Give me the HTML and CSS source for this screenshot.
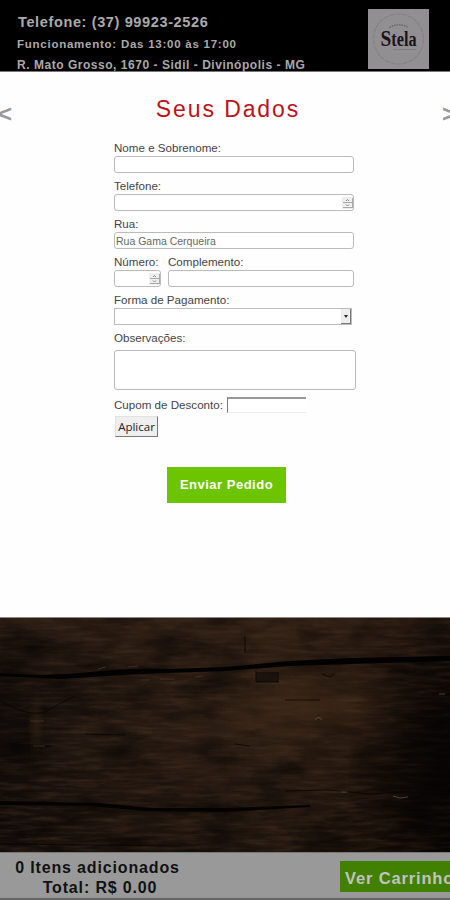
FILE: index.html
```html
<!DOCTYPE html>
<html lang="pt-br">
<head>
    <meta charset="UTF-8">
    <meta name="viewport" content="width=device-width, initial-scale=1.0">
    <title>Seus Dados</title>
    <link rel="stylesheet" href="styles.css">
</head>
<body>
    <!-- Cabeçalho -->
    <header class="topo">
        <div class="contato">
            <p class="telefone">Telefone: (37) 99923-2526</p>
            <p class="horario">Funcionamento: Das 13:00 às 17:00</p>
            <p class="endereco">R. Mato Grosso, 1670 - Sidil - Divinópolis - MG</p>
        </div>
        <svg class="logo" viewBox="0 0 60 60">
            <circle cx="30" cy="30" r="25" fill="none" stroke="#858286" stroke-width="1.2" stroke-dasharray="5 1"/>
            <path d="M21 18.5Q30 13 40 18.5" fill="none" stroke="#6c696e" stroke-width="1.5" stroke-dasharray="1.5 1"/>
            <text class="logo-nome" x="12" y="37" textLength="36" lengthAdjust="spacingAndGlyphs"><tspan class="inicial">S</tspan>tela</text>
            <path d="M25 40.5H47" stroke="#77747a" stroke-dasharray="1.5 .8"/>
        </svg>
    </header>

    <!-- Dados do cliente -->
    <main class="dados">
        <span class="seta">&lt;</span>
        <h1>Seus Dados</h1>
        <span class="seta direita">&gt;</span>

        <form class="formulario">
            <label for="nome">Nome e Sobrenome:</label>
            <input type="text" id="nome">

            <label for="telefone">Telefone:</label>
            <div class="numerico">
                <input type="text" id="telefone">
                <svg class="spin" viewBox="0 0 11 12"><path d="M1 5.5H10M1 10.5H10M10.5 1V11" stroke="#aaa" fill="none"/><path d="M4 4l1.5-1.5L7 4M4 7.5L5.5 9 7 7.5" stroke="#888" fill="none"/></svg>
            </div>

            <label for="rua">Rua:</label>
            <input type="text" id="rua" value="Rua Gama Cerqueira">

            <div class="linha">
                <div class="numero">
                    <label for="numero">Número:</label>
                    <div class="numerico">
                        <input type="text" id="numero">
                        <svg class="spin" viewBox="0 0 11 12"><path d="M1 5.5H10M1 10.5H10M10.5 1V11" stroke="#aaa" fill="none"/><path d="M4 4l1.5-1.5L7 4M4 7.5L5.5 9 7 7.5" stroke="#888" fill="none"/></svg>
                    </div>
                </div>
                <div class="complemento">
                    <label for="complemento">Complemento:</label>
                    <input type="text" id="complemento">
                </div>
            </div>

            <label for="pagamento">Forma de Pagamento:</label>
            <div class="pagamento" id="pagamento"><span class="abrir"></span></div>

            <label for="obs">Observações:</label>
            <textarea id="obs"></textarea>

            <div class="cupom">
                <label for="cupom">Cupom de Desconto:</label>
                <input type="text" id="cupom">
            </div>
            <button type="button" class="aplicar">Aplicar</button>
        </form>

        <button type="button" class="enviar">Enviar Pedido</button>
    </main>

    <!-- Fundo de madeira -->
    <svg class="madeira" viewBox="0 0 450 234" preserveAspectRatio="none">
        <defs>
            <linearGradient id="base" x1="0" x2="1">
                <stop offset="0" stop-color="#18110e"/>
                <stop offset=".25" stop-color="#251911"/>
                <stop offset=".6" stop-color="#302015"/>
                <stop offset=".78" stop-color="#25180f"/>
                <stop offset="1" stop-color="#0e0806"/>
            </linearGradient>
            <linearGradient id="sombra" x1="0" y1="0" x2="0" y2="1">
                <stop offset="0" stop-color="#3a2618" stop-opacity=".5"/>
                <stop offset=".5" stop-color="#000" stop-opacity="0"/>
                <stop offset="1" stop-color="#000" stop-opacity=".35"/>
            </linearGradient>
            <radialGradient id="canto">
                <stop offset="0" stop-color="#050302" stop-opacity=".85"/>
                <stop offset="1" stop-color="#050302" stop-opacity="0"/>
            </radialGradient>
            <radialGradient id="brilho">
                <stop offset="0" stop-color="#55381f" stop-opacity=".45"/>
                <stop offset="1" stop-color="#55381f" stop-opacity="0"/>
            </radialGradient>
            <filter id="veios" x="0" y="0" width="100%" height="100%" color-interpolation-filters="sRGB">
                <feTurbulence type="fractalNoise" baseFrequency=".03 .25" numOctaves="5" seed="8"/>
                <feColorMatrix values="0 0 0 0 .27  0 0 0 0 .18  0 0 0 0 .12  1.8 0 0 0 -.7"/>
            </filter>
            <filter id="manchas" x="0" y="0" width="100%" height="100%" color-interpolation-filters="sRGB">
                <feTurbulence type="fractalNoise" baseFrequency=".02 .05" numOctaves="5" seed="3"/>
                <feColorMatrix values="0 0 0 0 0  0 0 0 0 0  0 0 0 0 0  1.2 0 0 0 -.5"/>
            </filter>
        </defs>
        <rect width="450" height="234" fill="url(#base)"/>
        <rect width="450" height="234" fill="url(#sombra)"/>
        <rect width="450" height="234" filter="url(#veios)" opacity=".7"/>
        <rect width="450" height="234" filter="url(#manchas)"/>
        <ellipse cx="315" cy="85" rx="110" ry="50" fill="url(#brilho)"/>
        <ellipse cx="36" cy="105" rx="9" ry="32" fill="url(#brilho)"/>
        <ellipse cx="445" cy="150" rx="100" ry="140" fill="url(#canto)"/>
        <ellipse cx="0" cy="100" rx="80" ry="100" fill="url(#canto)" opacity=".5"/>
        <path d="M0 55Q50 59 90 54T170 51L225 49L290 43L350 40L450 38V43L350 46L290 48L225 53L140 56L60 61L0 58Z" fill="#030202"/>
        <path d="M0 183L100 185L150 190L225 190L310 187V189L225 194L145 193L90 188L0 187Z" fill="#050302"/>
        <g fill="none" stroke="#070403" stroke-opacity=".75">
            <path d="M0 82Q35 105 55 88L75 78"/>
            <path d="M10 126L50 128M85 116L125 117M285 173L330 172L370 176L410 173M235 126L250 128"/>
            <path d="M285 82L320 82M0 226L90 227L180 228M245 35V18"/>
            <path d="M279 64h-23v-11M322 56l8 3 5-4"/>
        </g>
        <path d="M256 54h23v10h-23z" fill="#0b0807" opacity=".6"/>
        <g fill="none" stroke="#4a321f" stroke-opacity=".8">
            <path d="M30 103h14M33 128h12M98 51l8-2M128 49l10-1M141 62h9M160 61h14M195 59l8-1"/>
        </g>
        <path d="M315 102q4-5 7 0M393 178l7 2 8-1M341 174h6M439 76h6" fill="none" stroke="#62594f" stroke-opacity=".7"/>
    </svg>

    <!-- Rodapé do carrinho -->
    <footer class="rodape">
        <div class="resumo">
            <p class="itens">0 Itens adicionados</p>
            <p class="total">Total: R$ 0.00</p>
        </div>
        <div class="carrinho">Ver Carrinho</div>
    </footer>
</body>
</html>
```

FILE: styles.css
```css
* {
    box-sizing: border-box;
}

body {
    margin: 0;
    height: 900px;
    overflow: hidden;
    font-family: "Liberation Sans", Arial, sans-serif;
    background-color: #000;
}

p {
    margin: 0;
    white-space: nowrap;
}

/* Cabeçalho */
.topo {
    display: flex;
    justify-content: space-between;
    height: 72px;
    padding: 9px 21px 0 17px;
    border-bottom: 1px solid #777;
    background-color: #000;
    color: #aaa;
    font-weight: bold;
}

.telefone {
    height: 25px;
    padding-left: 1px;
    line-height: 26px;
    font-size: 14.5px;
    letter-spacing: 0.63px;
}

.horario {
    height: 19px;
    line-height: 20px;
    font-size: 11.5px;
    letter-spacing: 0.75px;
}

.endereco {
    height: 18px;
    line-height: 24px;
    font-size: 12px;
    letter-spacing: 0.53px;
}

.logo {
    width: 61px;
    height: 60px;
    background-color: #918f92;
}

.logo-nome {
    font-family: "Liberation Serif", serif;
    font-size: 20px;
    font-weight: bold;
    fill: #18151a;
}

.inicial {
    font-size: 24px;
}

/* Dados do cliente */
.dados {
    display: grid;
    grid-template-columns: 40px 1fr 40px;
    grid-template-rows: 68px 311px 36px;
    height: 546px;
    row-gap: 8px;
    border-bottom: 1px solid #888;
    background-color: #fefefe;
    justify-items: center;
}

.seta {
    justify-self: start;
    margin: 28px 0 0 -2px;
    font-size: 24px;
    line-height: 27px;
    font-weight: bold;
    color: #999;
}

.direita {
    justify-self: end;
    margin-right: -6px;
}

h1 {
    margin: 23px 0 0 6px;
    font-size: 23px;
    line-height: 28px;
    font-weight: normal;
    letter-spacing: 1.9px;
    color: #bd1218;
}

.formulario {
    grid-column: 1 / 4;
    justify-self: start;
    width: 241px;
    margin: -8px 0 0 114px;
    display: flex;
    flex-direction: column;
    font-size: 11.6px;
    color: #444;
}

.formulario label {
    display: block;
    height: 16px;
    line-height: 15px;
    white-space: nowrap;
}

.formulario input {
    display: block;
    width: 240px;
    height: 17px;
    margin: 0 0 5px;
    padding: 0 1px;
    border: 1px solid #bbb;
    border-radius: 3px;
    background-color: #fff;
    font-family: inherit;
    font-size: 10.5px;
    color: #666;
}

.numerico {
    position: relative;
    width: 240px;
}

.spin {
    position: absolute;
    top: 3px;
    right: 1px;
    width: 11px;
    height: 12px;
    background-color: #eee;
}

.linha {
    display: flex;
    gap: 7px;
}

.numero,
.numero .numerico,
.formulario .numero input {
    width: 47px;
}

.formulario .complemento input {
    width: 186px;
}

.pagamento {
    display: flex;
    justify-content: flex-end;
    width: 238px;
    height: 17px;
    margin-bottom: 5px;
    border: 1px solid #bbb;
    background-color: #fff;
}

.abrir {
    display: flex;
    align-items: center;
    justify-content: center;
    width: 10px;
    height: 15px;
    border-right: 1px solid #777;
    border-bottom: 1px solid #777;
    background-color: #eee;
}

.abrir::after {
    content: "";
    border: 2px solid transparent;
    border-top: 3px solid #222;
    border-bottom: 0;
}

textarea {
    width: 242px;
    height: 40px;
    margin: 4px 0 7px;
    border: 1px solid #bbb;
    border-radius: 3px;
    background-color: #fff;
    resize: none;
}

.cupom {
    display: flex;
    height: 19px;
    gap: 4px;
}

.formulario .cupom input {
    width: 79px;
    height: 16px;
    border: 0;
    border-top: 2px solid #999;
    border-left: 1px solid #777;
    border-bottom: 1px solid #eee;
    border-radius: 0;
}

.aplicar {
    width: 43px;
    height: 21px;
    margin-left: 1px;
    padding: 0;
    border: 1px solid #e2e2e2;
    border-right-color: #777;
    border-bottom-color: #777;
    background-color: #efefef;
    font-family: "Open Sans", sans-serif;
    font-size: 11.5px;
    line-height: 18px;
    color: #222;
}

.enviar {
    grid-column: 1 / 4;
    width: 119px;
    height: 36px;
    margin-left: 3px;
    padding: 0 0 2px;
    border: 0;
    background-color: #6dc400;
    color: #fff;
    font-family: inherit;
    font-size: 13px;
    font-weight: bold;
    letter-spacing: 0.5px;
}

/* Fundo de madeira */
.madeira {
    display: block;
    width: 450px;
    height: 234px;
}

/* Rodapé do carrinho */
.rodape {
    display: flex;
    height: 48px;
    padding: 5px 0 0 14px;
    border-top: 1px solid #777;
    border-bottom: 2px solid #656565;
    background-color: #999;
    font-weight: bold;
    color: #111;
}

.resumo {
    width: 167px;
    flex-shrink: 0;
    text-align: center;
    font-size: 16px;
    line-height: 20px;
    letter-spacing: 0.85px;
}

.total {
    padding-left: 5px;
    letter-spacing: 0.85px;
}

.carrinho {
    flex-shrink: 0;
    width: 130px;
    height: 31px;
    margin: 3px 0 0 159px;
    padding-left: 5px;
    background-color: #418000;
    color: #c2c2c2;
    font-size: 16.5px;
    line-height: 34px;
    letter-spacing: 0.85px;
    white-space: nowrap;
}
```
